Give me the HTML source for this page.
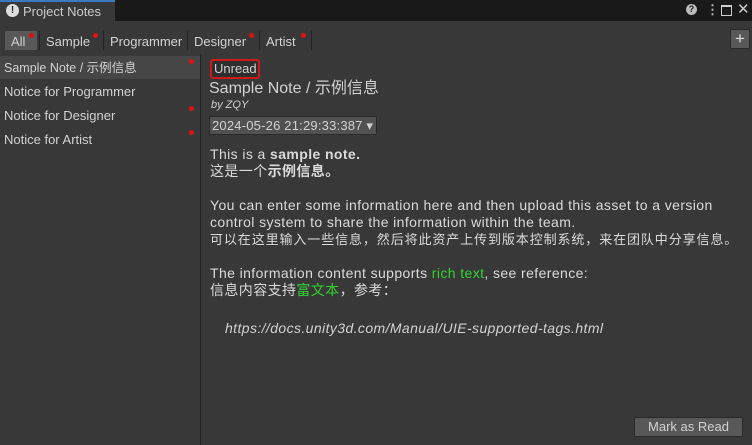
<html><head><style>
body{margin:0;width:752px;height:445px;background:#383838;font-family:"Liberation Sans","Noto Sans CJK SC",sans-serif;color:#d2d2d2;overflow:hidden;position:relative;font-size:13px}
.a{position:absolute;white-space:nowrap;line-height:16px}
.dot{position:absolute;width:5px;height:5px;border-radius:50%;background:#e01010}
</style></head><body>
<div class="a" style="left:0;top:0;width:752px;height:21px;background:#191919"></div>
<div class="a" style="left:0;top:0;width:115px;height:21px;background:#383838;border-top:2px solid #3a79bb;box-sizing:border-box"></div>
<div class="a" style="left:6px;top:4px;width:13px;height:13px;border-radius:50%;background:#ddd;color:#222;font-size:10px;font-weight:bold;text-align:center;line-height:13px">!</div>
<div class="a" style="left:23px;top:4px;font-size:13px;color:#ccc">Project Notes</div>
<div class="a" style="left:686px;top:4px;width:11px;height:11px;border-radius:50%;background:#bbb;color:#222;font-size:9px;font-weight:bold;text-align:center;line-height:11px">?</div>
<div class="a" style="left:706px;top:2px;color:#bbb;font-weight:bold">⋮</div>
<div class="a" style="left:721px;top:5px;width:9px;height:8px;border:1px solid #ccc;border-top-width:2px"></div>
<div class="a" style="left:737px;top:2px;color:#ccc;font-size:15px">✕</div>
<div class="a" style="left:5px;top:31px;width:32px;height:19px;background:#585858"></div>
<div class="a" style="left:11px;top:34px">All</div><div class="dot" style="left:29px;top:33px"></div>
<div class="a" style="left:39px;top:31px;width:1px;height:19px;background:#222"></div>
<div class="a" style="left:46px;top:34px">Sample</div><div class="dot" style="left:93px;top:33px"></div>
<div class="a" style="left:103px;top:31px;width:1px;height:19px;background:#222"></div>
<div class="a" style="left:110px;top:34px">Programmer</div>
<div class="a" style="left:187px;top:31px;width:1px;height:19px;background:#222"></div>
<div class="a" style="left:194px;top:34px">Designer</div><div class="dot" style="left:249px;top:33px"></div>
<div class="a" style="left:259px;top:31px;width:1px;height:19px;background:#222"></div>
<div class="a" style="left:266px;top:34px">Artist</div><div class="dot" style="left:301px;top:33px"></div>
<div class="a" style="left:311px;top:31px;width:1px;height:19px;background:#222"></div>
<div class="a" style="left:730px;top:29px;width:18px;height:18px;background:#585858;border:1px solid #2a2a2a;color:#ddd;text-align:center;line-height:17px;font-size:17px">+</div>
<div class="a" style="left:200px;top:55px;width:1px;height:390px;background:#232323"></div>
<div class="a" style="left:0;top:56px;width:200px;height:23px;background:#464646"></div>
<div class="a" style="left:4px;top:60px;font-size:12.5px">Sample Note / 示例信息</div><div class="dot" style="left:189px;top:59px"></div>
<div class="a" style="left:4px;top:84px">Notice for Programmer</div>
<div class="a" style="left:4px;top:108px">Notice for Designer</div><div class="dot" style="left:189px;top:106px"></div>
<div class="a" style="left:4px;top:132px">Notice for Artist</div><div class="dot" style="left:189px;top:130px"></div>
<div class="a" style="left:210px;top:59px;width:46px;height:16px;border:2px solid #d01818;border-radius:3px;background:#2e2e2e"></div>
<div class="a" style="left:214px;top:61px">Unread</div>
<div class="a" style="left:209px;top:80px;font-size:16px;line-height:18px">Sample Note / 示例信息</div>
<div class="a" style="left:211px;top:99px;font-size:11px;font-style:italic;line-height:13px">by ZQY</div>
<div class="a" style="left:209px;top:116px;width:166px;height:17px;background:#515151;border:1px solid #2a2a2a;border-radius:2px"></div>
<div class="a" style="left:212px;top:118px;letter-spacing:0.2px">2024-05-26 21:29:33:387 ▾</div>
<div class="a" style="left:210px;top:146px;line-height:17px;font-size:14px;letter-spacing:0.4px;color:#dadada">This is a <b>sample note.</b><br>这是一个<b>示例信息。</b><br><br>You can enter some information here and then upload this asset to a version<br>control system to share the information within the team.<br><span style="font-size:13px;letter-spacing:0.9px">可以在这里输入一些信息，然后将此资产上传到版本控制系统，来在团队中分享信息。</span><br><br>The information content supports <span style="color:#2ed32e">rich text</span>, see reference:<br>信息内容支持<span style="color:#2ed32e">富文本</span>，参考：</div>
<div class="a" style="left:225px;top:320px;font-size:14px;font-style:italic;letter-spacing:0.4px">https://docs.unity3d.com/Manual/UIE-supported-tags.html</div>
<div class="a" style="left:634px;top:417px;width:107px;height:18px;background:#585858;border:1px solid #2a2a2a;border-radius:2px;text-align:center;line-height:18px">Mark as Read</div>
</body></html>
